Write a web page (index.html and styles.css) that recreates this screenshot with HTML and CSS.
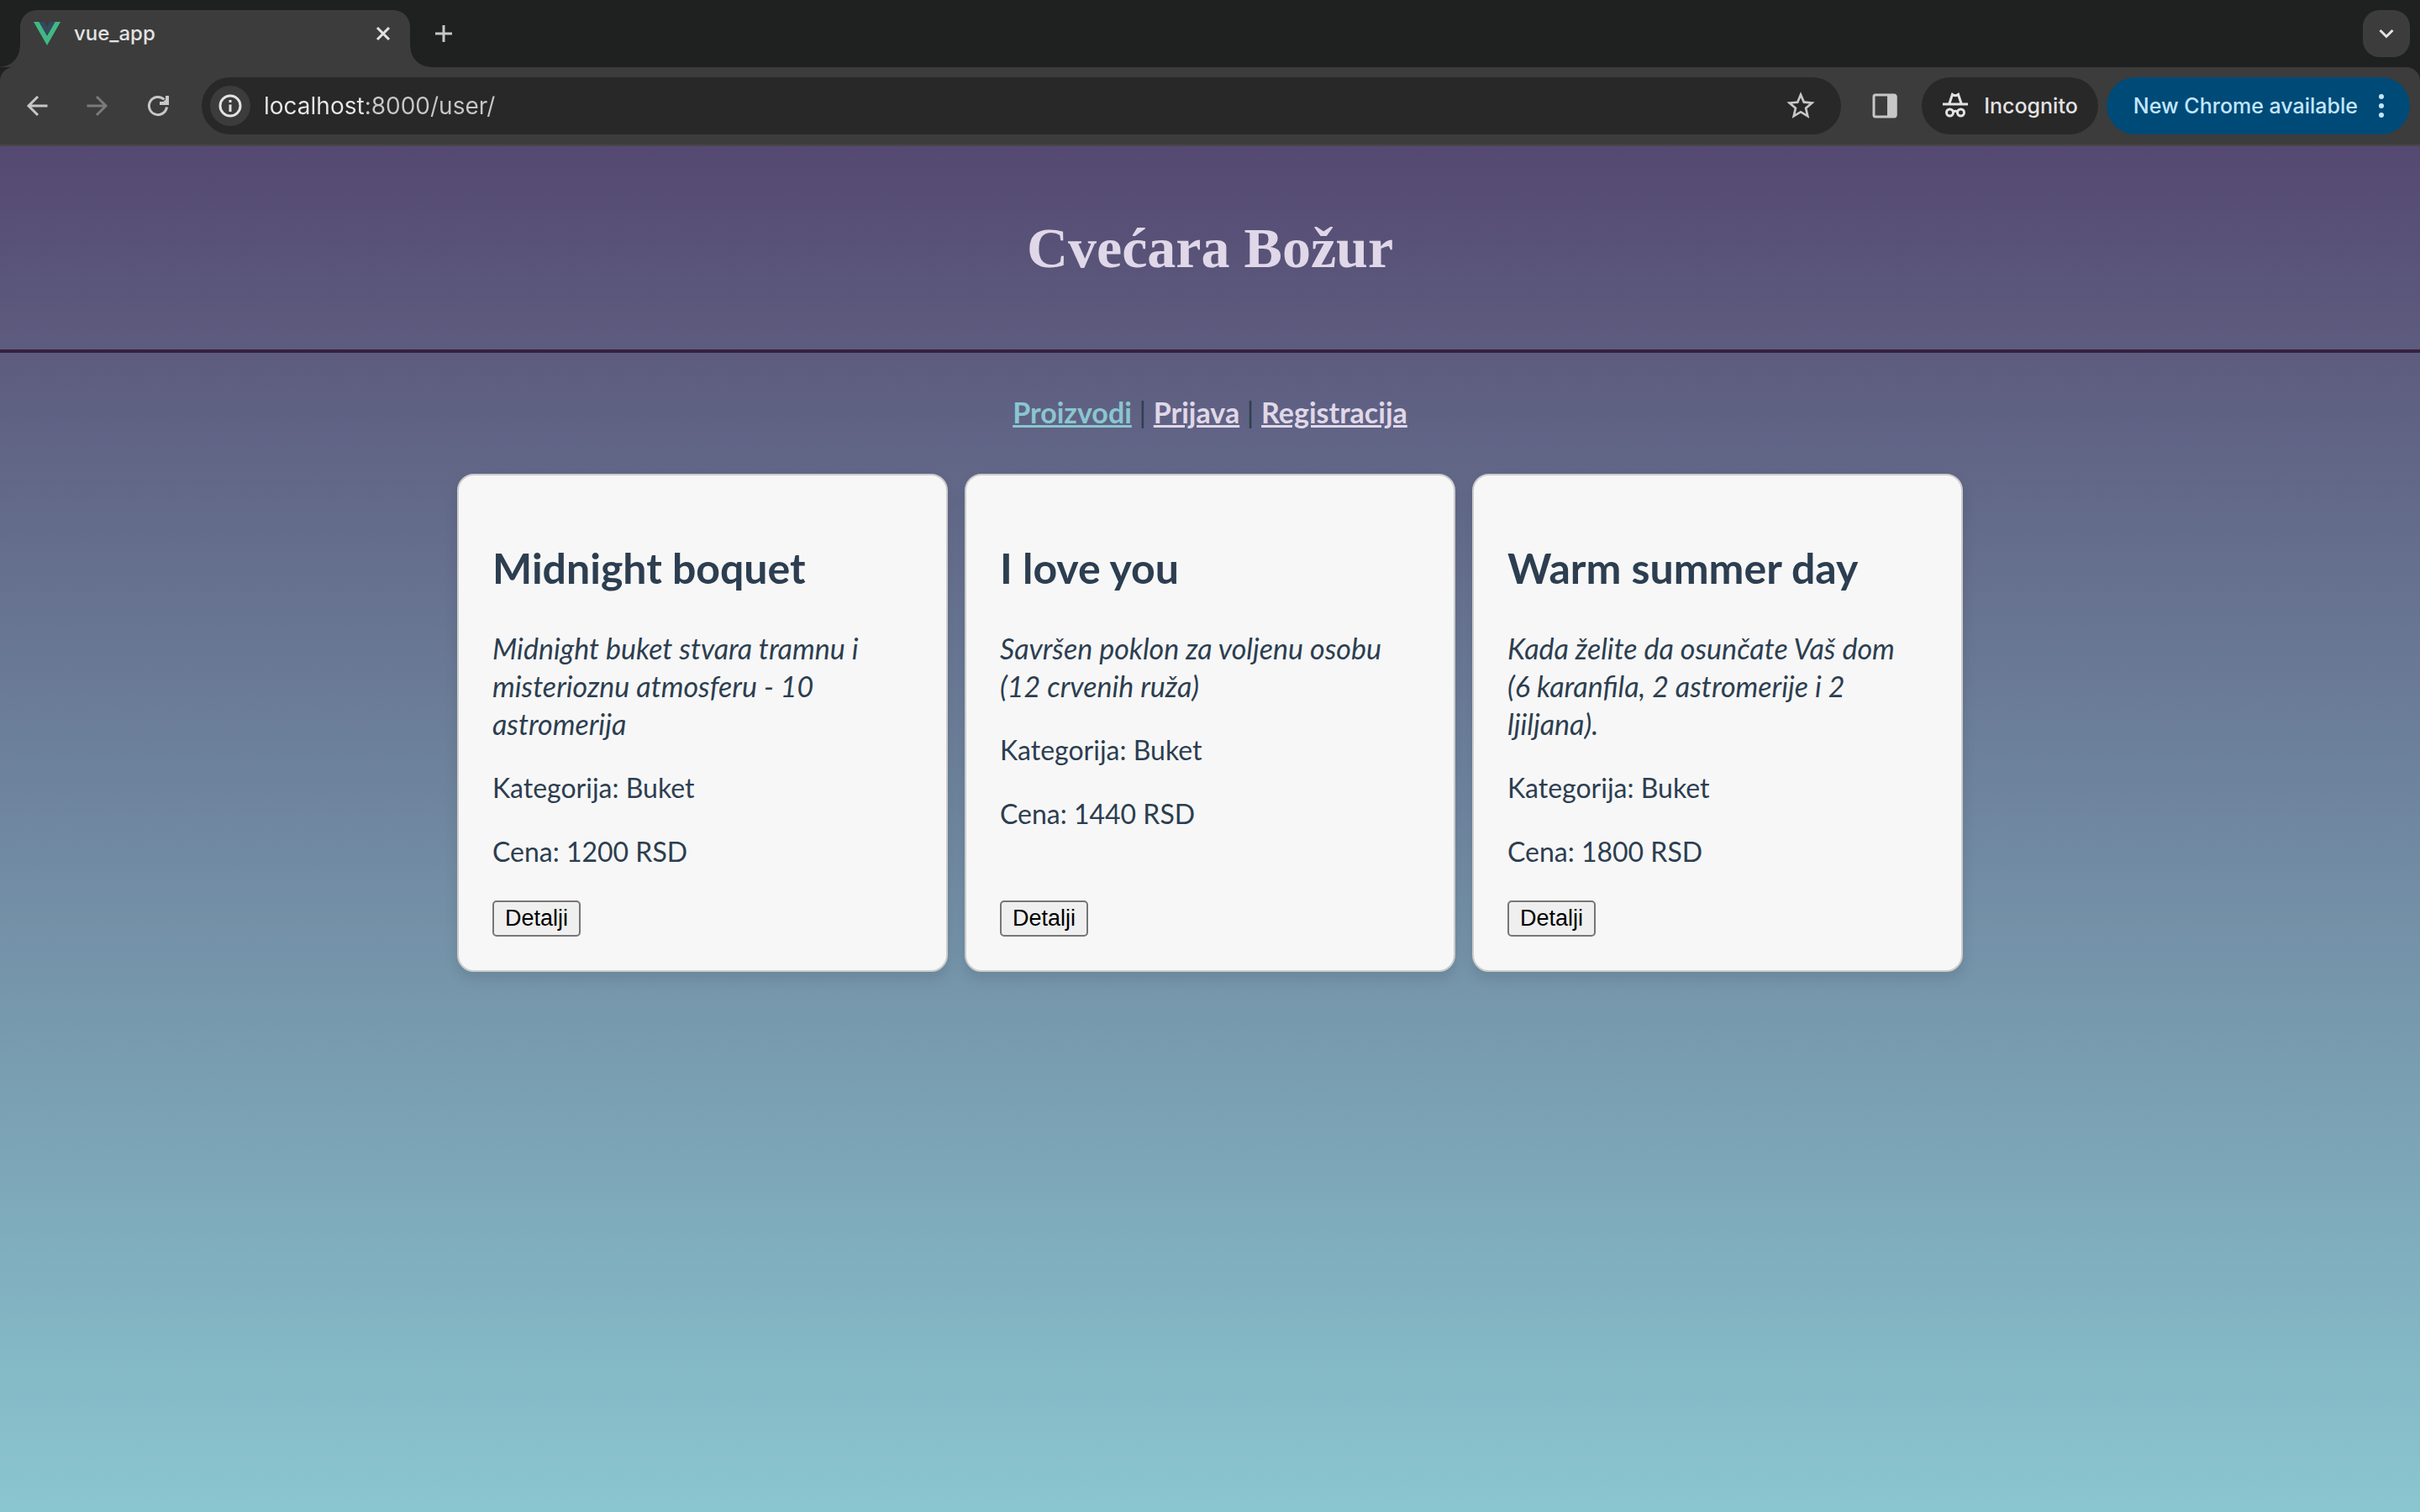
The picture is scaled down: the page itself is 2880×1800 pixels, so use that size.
FILE: index.html
```html
<!DOCTYPE html>
<html lang="sr-Latn">
<head>
<meta charset="utf-8">
<meta name="viewport" content="width=device-width, initial-scale=1">
<title>vue_app</title>
<link rel="stylesheet" href="styles.css">
</head>
<body>
<div class="browser">
  <div class="tab-strip">
    <div class="tab">
      <svg class="tab-favicon" viewBox="0 0 32 28" aria-hidden="true"><path fill="#41b883" d="M0 0h6.500L16 16.500 25.500 0H32L16 28z"/><path fill="#35495e" d="M6.500 0h6L16 6l3.500-6h6L16 16.500z"/></svg>
      <span class="tab-title">vue_app</span>
      <button class="tab-close" type="button" aria-label="Close tab"><svg viewBox="0 0 32 32"><path d="M9 9l14 14M23 9L9 23"/></svg></button>
    </div>
    <button class="new-tab" type="button" aria-label="New tab"><svg viewBox="0 0 40 40"><path d="M20 10v20M10 20h20"/></svg></button>
    <button class="tab-search" type="button" aria-label="Search tabs"><svg viewBox="0 0 40 40"><path d="M12.500 16l7.500 7.500 7.500-7.500"/></svg></button>
  </div>
  <div class="toolbar">
    <div class="nav-buttons">
      <button class="icon-button" type="button" aria-label="Back"><svg viewBox="0 0 40 40"><path d="M32.500 20H10M21 9L10 20l11 11"/></svg></button>
      <button class="icon-button icon-button-off" type="button" aria-label="Forward"><svg viewBox="0 0 40 40"><path d="M7.500 20H30M19 9l11 11-11 11"/></svg></button>
      <button class="icon-button" type="button" aria-label="Reload"><svg viewBox="0 0 40 40"><path d="M30.500 21.500A10.600 10.600 0 1 1 27.500 12.500"/><path class="icon-solid" d="M29 8h4v11H22v-4h4.500l2.500-2.500z"/></svg></button>
    </div>
    <div class="address">
      <button class="site-info" type="button" aria-label="Site information"><svg viewBox="0 0 40 40"><circle cx="20" cy="20" r="12"/><path d="M20 18.500v8.500M20 13v3"/></svg></button>
      <input class="address-input" type="text" value="localhost:8000/user/" aria-label="Address" spellcheck="false">
      <button class="bookmark" type="button" aria-label="Bookmark this page"><svg viewBox="0 0 24 24"><path d="M22 9.240l-7.190-.62L12 2 9.190 8.630 2 9.240l5.460 4.730L5.820 21 12 17.270 18.180 21l-1.630-7.030L22 9.240zM12 15.400l-3.760 2.270 1-4.280-3.320-2.880 4.380-.38L12 6.100l1.710 4.040 4.380.38-3.320 2.880 1 4.280L12 15.400z"/></svg></button>
    </div>
    <button class="icon-button side-panel" type="button" aria-label="Side panel"><svg viewBox="0 0 40 40"><rect x="7" y="7" width="26" height="26" rx="2"/><path class="icon-solid" d="M23 6h8q3.500 0 3.500 3.500v21q0 3.500-3.500 3.500h-8z"/></svg></button>
    <button class="incognito" type="button"><svg viewBox="0 0 40 40" aria-hidden="true"><path d="M5 18h30M13 17l3.500-10.500q3.500 2.500 7 0L27 17"/><circle cx="13.500" cy="28" r="4"/><circle cx="26.500" cy="28" r="4"/><path d="M17 27q3-1.500 6 0"/></svg>Incognito</button>
    <button class="update" type="button">New Chrome available<svg viewBox="0 0 40 40" aria-hidden="true"><circle cx="20" cy="9" r="3"/><circle cx="20" cy="20" r="3"/><circle cx="20" cy="31" r="3"/></svg></button>
  </div>
</div>

<div class="shop">
  <header class="shop-header">
    <h1 class="shop-title">Cvećara Božur</h1>
  </header>
  <nav class="shop-nav">
    <a class="nav-link nav-link-active" href="#proizvodi">Proizvodi</a> | <a class="nav-link" href="#prijava">Prijava</a> | <a class="nav-link" href="#registracija">Registracija</a>
  </nav>
  <main class="products">
    <article class="card">
      <div class="card-body">
        <h2 class="card-title">Midnight boquet</h2>
        <p class="card-text card-description">Midnight buket stvara tramnu i misterioznu atmosferu - 10 astromerija</p>
        <p class="card-text">Kategorija: Buket</p>
        <p class="card-text">Cena: 1200 RSD</p>
      </div>
      <button class="card-button" type="button">Detalji</button>
    </article>
    <article class="card">
      <div class="card-body">
        <h2 class="card-title">I love you</h2>
        <p class="card-text card-description">Savršen poklon za voljenu osobu (12 crvenih ruža)</p>
        <p class="card-text">Kategorija: Buket</p>
        <p class="card-text">Cena: 1440 RSD</p>
      </div>
      <button class="card-button" type="button">Detalji</button>
    </article>
    <article class="card">
      <div class="card-body">
        <h2 class="card-title">Warm summer day</h2>
        <p class="card-text card-description">Kada želite da osunčate Vaš dom (6 karanfila, 2 astromerije i 2 ljiljana).</p>
        <p class="card-text">Kategorija: Buket</p>
        <p class="card-text">Cena: 1800 RSD</p>
      </div>
      <button class="card-button" type="button">Detalji</button>
    </article>
  </main>
</div>
</body>
</html>
```
FILE: styles.css
```css
* {
  box-sizing: border-box;
}

body {
  display: flex;
  flex-direction: column;
  min-height: 100vh;
  margin: 0;
  color: #2c3e50;
  font-family: Lato, "Liberation Sans", sans-serif;
  font-size: 32px;
}

button {
  padding: 0;
  border: 0;
  background: none;
  color: inherit;
  font: inherit;
}

svg {
  display: block;
  flex: none;
}

/* Browser window */

.browser {
  background: #1f2121;
  color: #e3e3e3;
  font-family: Inter, "Liberation Sans", sans-serif;
}

.browser svg {
  width: 40px;
  height: 40px;
  fill: none;
  stroke: currentColor;
  stroke-width: 3;
}

.browser .icon-solid {
  fill: currentColor;
  stroke: none;
}

.tab-strip {
  display: flex;
  align-items: center;
  height: 80px;
  padding: 0 12px 0 24px;
}

.tab {
  position: relative;
  display: flex;
  align-self: flex-end;
  align-items: center;
  gap: 16px;
  width: 464px;
  height: 68px;
  padding: 0 16px 12px;
  border-radius: 20px 20px 0 0;
  background: #3c3c3c;
}

.tab::before,
.tab::after {
  content: "";
  position: absolute;
  bottom: 0;
  width: 24px;
  height: 24px;
}

.tab::before {
  right: 100%;
  background: radial-gradient(circle at 0 0, transparent 23px, #3c3c3c 24px);
}

.tab::after {
  left: 100%;
  background: radial-gradient(circle at 100% 0, transparent 23px, #3c3c3c 24px);
}

.browser .tab-favicon {
  width: 32px;
  height: 28px;
  stroke: none;
}

.tab-title {
  flex: 1;
  font-size: 24px;
  font-weight: 500;
  line-height: 32px;
}

.browser .tab-close svg {
  width: 32px;
  height: 32px;
}

.new-tab {
  display: grid;
  place-items: center;
  width: 56px;
  height: 56px;
  margin-left: 12px;
  color: #c7c7c7;
}

.tab-search {
  display: grid;
  place-items: center;
  width: 56px;
  height: 56px;
  margin-left: auto;
  border-radius: 20px;
  background: #3c3c3c;
}

.toolbar {
  display: flex;
  align-items: center;
  padding: 12px 12px 12px 10px;
  border-bottom: 2px solid #474747;
  border-radius: 16px 16px 0 0;
  background: #3c3c3c;
}

.nav-buttons {
  display: flex;
  gap: 4px;
  margin-right: 18px;
}

.icon-button {
  display: grid;
  place-items: center;
  width: 68px;
  height: 68px;
  color: #c7c7c7;
}

.icon-button-off {
  color: #7a7a7a;
}

.address {
  display: flex;
  flex: 1;
  align-items: center;
  height: 68px;
  padding: 0 28px 0 10px;
  border-radius: 34px;
  background: #282828;
}

.site-info {
  display: grid;
  place-items: center;
  width: 48px;
  height: 48px;
  border-radius: 50%;
  background: #3c3c3c;
}

/* The host is lighter than the port and path that follow it */
.address-input {
  flex: 1;
  min-width: 0;
  height: 40px;
  margin-left: 16px;
  padding: 0;
  border: 0;
  outline: 0;
  background: linear-gradient(90deg, #e8e8e8 120px, #c7c7c7 120px);
  background-clip: text;
  -webkit-background-clip: text;
  color: #e3e3e3;
  -webkit-text-fill-color: transparent;
  font: 400 28px/40px Inter, "Liberation Sans", sans-serif;
}

.bookmark {
  color: #c7c7c7;
}

.browser .bookmark svg {
  fill: currentColor;
  stroke: none;
}

.side-panel {
  margin: 0 10px 0 18px;
}

.incognito,
.update {
  display: flex;
  align-items: center;
  height: 68px;
  border-radius: 34px;
  font-size: 25px;
  font-weight: 500;
  white-space: nowrap;
}

.incognito {
  gap: 14px;
  padding: 0 24px 0 20px;
  background: #282828;
}

.update {
  gap: 8px;
  margin-left: 10px;
  padding: 0 14px 0 32px;
  background: #004a77;
  color: #c2e7ff;
}

.browser .update svg {
  fill: currentColor;
  stroke: none;
}

/* Shop page */

.shop {
  flex: 1;
  background: linear-gradient(#554971, #8ac6d0);
}

.shop-header {
  padding: 75px 40px;
  border-bottom: 4px solid #36213e;
}

.shop-title {
  margin: 0;
  color: #e0d8e8;
  font-family: "Liberation Serif", serif;
  font-size: 68px;
  font-weight: 700;
  line-height: 92px;
  text-align: center;
}

.shop-nav {
  padding: 49px 40px 51px;
  font-size: 34px;
  line-height: 44px;
  text-align: center;
}

.nav-link {
  color: #e0d8e8;
  font-weight: 700;
}

.nav-link-active {
  color: #8ac6d0;
}

.products {
  display: grid;
  grid-template-columns: repeat(auto-fit, minmax(480px, 1fr));
  gap: 20px;
  max-width: 1792px;
  margin: 0 auto;
}

.card {
  display: flex;
  flex-direction: column;
  align-items: flex-start;
  padding: 40px;
  border: 2px solid #ccc;
  border-radius: 20px;
  background: #f7f7f7;
  box-shadow: 0 8px 16px rgba(0, 0, 0, 0.1);
}

.card-body {
  flex: 1;
  padding-bottom: 5px;
}

.card-title {
  margin: 38px 0 40px;
  font-size: 50px;
  font-weight: 700;
  line-height: 65px;
}

.card-text {
  margin: 0 0 31px;
  line-height: 45px;
}

.card-description {
  padding-right: 16px;
  font-size: 34px;
  font-style: italic;
}

.card-button {
  padding: 4px 13px;
  border: 2px solid #767676;
  border-radius: 5px;
  background: #efefef;
  color: #000;
  font: 27px/31px "Liberation Sans", Arial, sans-serif;
}
```
